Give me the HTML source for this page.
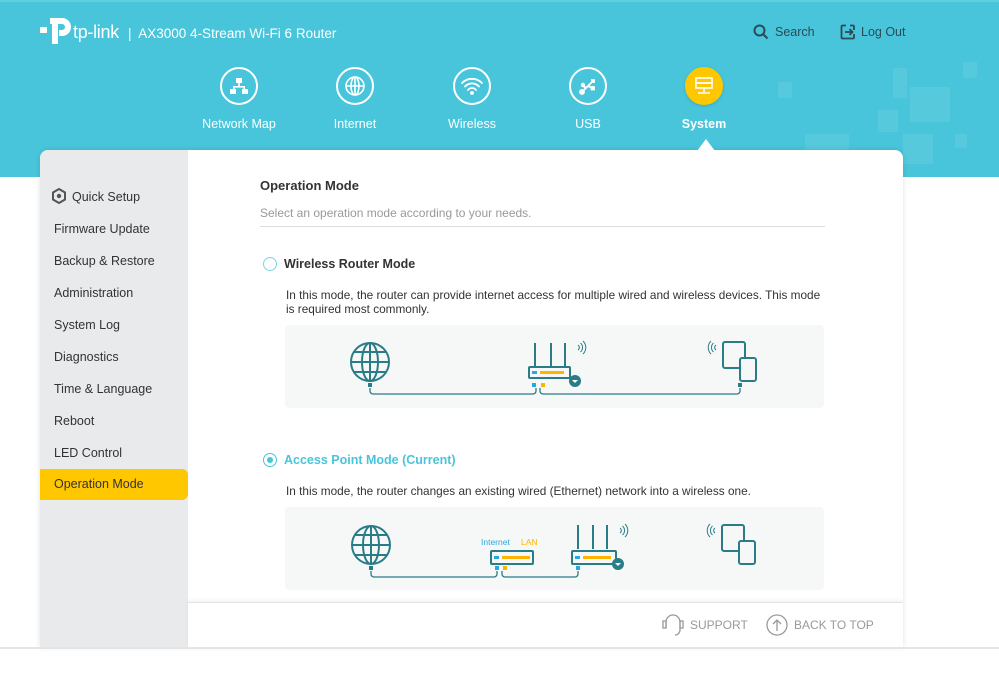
<!DOCTYPE html>
<html><head><meta charset="utf-8"><style>
*{margin:0;padding:0;box-sizing:border-box}
body{width:999px;height:699px;position:relative;background:#fff;font-family:"Liberation Sans",sans-serif;overflow:hidden}
.hdr{position:absolute;left:0;top:0;width:999px;height:177px;background:#48c5da;border-top:2px solid #5fd0e0}
.a{position:absolute}
.nav{position:absolute;top:67px;width:100px;text-align:center;color:#fff;font-size:12.5px}
.nav .c{width:38px;height:38px;border:2px solid #fff;border-radius:50%;margin:0 auto 12px;display:flex;align-items:center;justify-content:center}
.card{position:absolute;left:40px;top:150px;width:863px;height:497px;background:#fff;border-radius:8px 8px 0 0;box-shadow:0 0 6px rgba(0,0,0,.12);overflow:hidden}
.side{position:absolute;left:0;top:0;width:148px;height:497px;background:#e9eaec}
.side div{position:absolute;left:14px;font-size:12.5px;color:#333}
.txt{font-size:11.8px;color:#333;position:absolute}
.box{position:absolute;left:285px;width:539px;height:83px;background:#f6f8f8;border-radius:4px}
.sq{position:absolute;background:rgba(255,255,255,.08)}
</style></head><body>
<div class="hdr">
 <div class="sq" style="left:893px;top:66px;width:14px;height:30px"></div>
 <div class="sq" style="left:910px;top:85px;width:40px;height:35px"></div>
 <div class="sq" style="left:963px;top:60px;width:14px;height:16px"></div>
 <div class="sq" style="left:805px;top:132px;width:44px;height:20px"></div>
 <div class="sq" style="left:878px;top:108px;width:20px;height:22px"></div>
 <div class="sq" style="left:903px;top:132px;width:30px;height:30px"></div>
 <div class="sq" style="left:778px;top:80px;width:14px;height:16px"></div>
 <div class="sq" style="left:955px;top:132px;width:12px;height:14px"></div>
</div>
<svg class="a" style="left:39px;top:15px" width="34" height="32" viewBox="0 0 34 32"><path d="M11 3h12a9 9 0 0 1 0 18h-3v-6h3a3 3 0 0 0 0-6h-4v20h-6V9h-2z M1 12h7v6H1z" fill="#fff"/></svg>
<div class="a" style="left:73px;top:22px;color:#fff;font-size:18px;letter-spacing:-.3px">tp-link</div>
<div class="a" style="left:128px;top:26px;color:#fff;font-size:13.5px">|&nbsp; AX3000 4-Stream Wi-Fi 6 Router</div>
<svg class="a" style="left:753px;top:24px" width="16" height="16" viewBox="0 0 16 16"><circle cx="6.5" cy="6.5" r="5" fill="none" stroke="#2c4a55" stroke-width="2"/><path d="M10 10l4.5 4.5" stroke="#2c4a55" stroke-width="2"/></svg>
<div class="a" style="left:775px;top:25px;color:#2c4a55;font-size:12.5px">Search</div>
<svg class="a" style="left:840px;top:24px" width="16" height="16" viewBox="0 0 16 16"><path d="M6 1.5H2.5a1 1 0 0 0-1 1v11a1 1 0 0 0 1 1H13a1 1 0 0 0 1-1V10M14 6V2.5a1 1 0 0 0-1-1H10" fill="none" stroke="#2c4a55" stroke-width="1.8"/><path d="M5 8h7M9.5 5l3 3-3 3" fill="none" stroke="#2c4a55" stroke-width="1.8"/></svg>
<div class="a" style="left:861px;top:25px;color:#2c4a55;font-size:12.5px">Log Out</div>

<div class="nav" style="left:189px"><div class="c"><svg width="20" height="18" viewBox="0 0 20 18" fill="#fff"><rect x="7" y="1" width="6" height="5"/><rect x="1" y="12" width="6" height="5"/><rect x="13" y="12" width="6" height="5"/><path d="M9.2 6h1.6v3H16v3h-1.6v-1.4H5.6V12H4V9h5.2z"/></svg></div>Network Map</div>
<div class="nav" style="left:305px"><div class="c"><svg width="22" height="22" viewBox="0 0 22 22" fill="none" stroke="#fff" stroke-width="1.6"><circle cx="11" cy="11" r="9"/><ellipse cx="11" cy="11" rx="4" ry="9"/><path d="M2 11h18M11 2v18"/></svg></div>Internet</div>
<div class="nav" style="left:422px"><div class="c"><svg width="24" height="20" viewBox="0 0 24 20" fill="none" stroke="#fff" stroke-width="1.8" stroke-linecap="round"><path d="M2 7a14 14 0 0 1 20 0M5 10.5a9.5 9.5 0 0 1 14 0M8 14a5 5 0 0 1 8 0"/><circle cx="12" cy="17" r="1" fill="#fff"/></svg></div>Wireless</div>
<div class="nav" style="left:538px"><div class="c"><svg width="20" height="20" viewBox="0 0 20 20" fill="none" stroke="#fff" stroke-width="1.8"><path d="M4 16L16 4M13 4h3v3M8 12l-3-2M10 10l4 2"/><circle cx="4" cy="16" r="2" fill="#fff"/><circle cx="5" cy="9" r="1.3" fill="#fff"/><rect x="13.5" y="11" width="2.5" height="2.5" fill="#fff"/></svg></div>USB</div>
<div class="nav" style="left:654px;font-weight:bold"><div class="c" style="background:#ffc700;border-color:#ffc700;box-shadow:0 1px 3px rgba(0,0,0,.15)"><svg width="20" height="18" viewBox="0 0 20 18" fill="none" stroke="#fff" stroke-width="1.6"><rect x="2" y="1" width="16" height="5"/><rect x="2" y="6" width="16" height="5"/><path d="M10 11v4M4 16h12"/></svg></div>System</div>

<div class="card">
 <div class="side">
  <svg class="a" style="left:11px;top:38px" width="16" height="16" viewBox="0 0 16 16"><path d="M8 1l6 3.5v7L8 15l-6-3.5v-7z" fill="none" stroke="#555" stroke-width="2"/><circle cx="8" cy="8" r="2.2" fill="#555"/></svg>
  <div style="top:40px;left:32px">Quick Setup</div>
  <div style="top:72px">Firmware Update</div>
  <div style="top:104px">Backup &amp; Restore</div>
  <div style="top:136px">Administration</div>
  <div style="top:168px">System Log</div>
  <div style="top:200px">Diagnostics</div>
  <div style="top:232px">Time &amp; Language</div>
  <div style="top:264px">Reboot</div>
  <div style="top:296px">LED Control</div>
 </div>
 <div class="a" style="left:0;top:319px;width:148px;height:31px;background:#ffc700;border-radius:0 6px 6px 0"></div>
 <div class="a" style="left:14px;top:327px;font-size:12.5px;color:#333">Operation Mode</div>
 <div class="a" style="left:148px;top:452px;width:715px;height:45px;border-top:1px solid #e2e2e2;box-shadow:0 -2px 4px rgba(0,0,0,.05)"></div>
</div>
<div class="a" style="left:697px;top:139px;width:0;height:0;border-left:9px solid transparent;border-right:9px solid transparent;border-bottom:12px solid #fff"></div>

<div class="a" style="left:260px;top:178px;font-size:13px;font-weight:bold;color:#333">Operation Mode</div>
<div class="a" style="left:260px;top:206px;font-size:12px;color:#999">Select an operation mode according to your needs.</div>
<div class="a" style="left:260px;top:226px;width:565px;height:1px;background:#ddd"></div>

<div class="a" style="left:263px;top:257px;width:14px;height:14px;border:1.5px solid #7fd5e2;border-radius:50%"></div>
<div class="a" style="left:284px;top:257px;font-size:12.5px;font-weight:bold;color:#333">Wireless Router Mode</div>
<div class="txt" style="left:286px;top:288px;line-height:14px;width:545px">In this mode, the router can provide internet access for multiple wired and wireless devices. This mode is required most commonly.</div>
<div class="box" style="top:325px"></div>

<div class="a" style="left:263px;top:453px;width:14px;height:14px;border:1.5px solid #48c5da;border-radius:50%"><div style="position:absolute;left:2.5px;top:2.5px;width:6px;height:6px;background:#48c5da;border-radius:50%"></div></div>
<div class="a" style="left:284px;top:453px;font-size:12.5px;font-weight:bold;color:#48c5da">Access Point Mode (Current)</div>
<div class="txt" style="left:286px;top:484px">In this mode, the router changes an existing wired (Ethernet) network into a wireless one.</div>
<div class="box" style="top:507px"></div>

<svg class="a" style="left:0;top:0" width="999" height="699" viewBox="0 0 999 699">
<g fill="none" stroke="#2a7c87" stroke-width="2">
 <circle cx="370" cy="362" r="19"/><ellipse cx="370" cy="362" rx="8" ry="19"/><path d="M351 362h38M370 343v38M354 352h32M354 372h32"/>
 <path d="M535 343v24M551 343v24M565 343v24"/>
 <rect x="529" y="367" width="41" height="11" rx="1"/>
 <path d="M578 345a3 3 0 0 1 0 5M580.5 343a6 6 0 0 1 0 9M583 341a9 9 0 0 1 0 13" stroke-width="1"/>
 <rect x="723" y="342" width="22" height="26" rx="2"/><rect x="740" y="358" width="16" height="23" rx="2" fill="#f6f8f8"/>
 <path d="M716 345a3 3 0 0 0 0 5M713.5 343a6 6 0 0 0 0 9M711 341a9 9 0 0 0 0 13" stroke-width="1"/>
 <path d="M370 388v3a3 3 0 0 0 3 3h160a3 3 0 0 0 3-3v-3M540 388v3a3 3 0 0 0 3 3h194a3 3 0 0 0 3-3v-3" stroke-width="1.3"/>
 <circle cx="371" cy="545" r="19"/><ellipse cx="371" cy="545" rx="8" ry="19"/><path d="M352 545h38M371 526v38M355 535h32M355 555h32"/>
 <rect x="491" y="551" width="42" height="13" rx="1"/>
 <path d="M578 525v24M593 525v24M607 525v24"/>
 <rect x="572" y="551" width="44" height="13" rx="1"/>
 <path d="M620 528a3 3 0 0 1 0 5M622.5 526a6 6 0 0 1 0 9M625 524a9 9 0 0 1 0 13" stroke-width="1"/>
 <rect x="722" y="525" width="22" height="26" rx="2"/><rect x="739" y="541" width="16" height="23" rx="2" fill="#f6f8f8"/>
 <path d="M715 528a3 3 0 0 0 0 5M712.5 526a6 6 0 0 0 0 9M710 524a9 9 0 0 0 0 13" stroke-width="1"/>
 <path d="M371 571v3a3 3 0 0 0 3 3h120a3 3 0 0 0 3-3v-3M502 571v3a3 3 0 0 0 3 3h70a3 3 0 0 0 3-3v-3" stroke-width="1.3"/>
</g>
<g fill="#2a7c87"><circle cx="575" cy="381" r="6"/><circle cx="618" cy="564" r="6"/>
<rect x="368" y="383" width="4" height="4"/><rect x="738" y="383" width="4" height="4"/><rect x="369" y="566" width="4" height="4"/></g>
<g fill="#fff"><path d="M572 380l3 3 3-3z"/><path d="M615 563l3 3 3-3z"/></g>
<g fill="#29a8e0"><rect x="532" y="383" width="4" height="4"/><rect x="495" y="566" width="4" height="4"/><rect x="576" y="566" width="4" height="4"/>
<rect x="532" y="371" width="5" height="3"/><rect x="494" y="556" width="5" height="3"/><rect x="575" y="556" width="5" height="3"/></g>
<g fill="#ffb400"><rect x="541" y="383" width="4" height="4"/><rect x="503" y="566" width="4" height="4"/>
<rect x="540" y="371" width="24" height="3"/><rect x="502" y="556" width="28" height="3"/><rect x="583" y="556" width="28" height="3"/></g>
<text x="481" y="545" font-size="8.5" fill="#29a8e0" font-family="Liberation Sans">Internet</text>
<text x="521" y="545" font-size="8.5" fill="#ffb400" font-family="Liberation Sans">LAN</text>
<g fill="none" stroke="#999" stroke-width="1.3"><path d="M666 628v-6a7 7 0 0 1 14 0v8a5 5 0 0 1-5 5"/><rect x="663" y="621" width="3" height="7"/><rect x="680" y="621" width="3" height="7"/>
<circle cx="777" cy="625" r="10"/><path d="M777 631v-11M773 624l4-4 4 4"/></g>
<text x="690" y="629" font-size="12" fill="#999" font-family="Liberation Sans">SUPPORT</text>
<text x="794" y="629" font-size="12" fill="#999" font-family="Liberation Sans">BACK TO TOP</text>
</svg>
<div class="a" style="left:0;top:647px;width:999px;height:2px;background:#e4e4e4"></div>
</body></html>
